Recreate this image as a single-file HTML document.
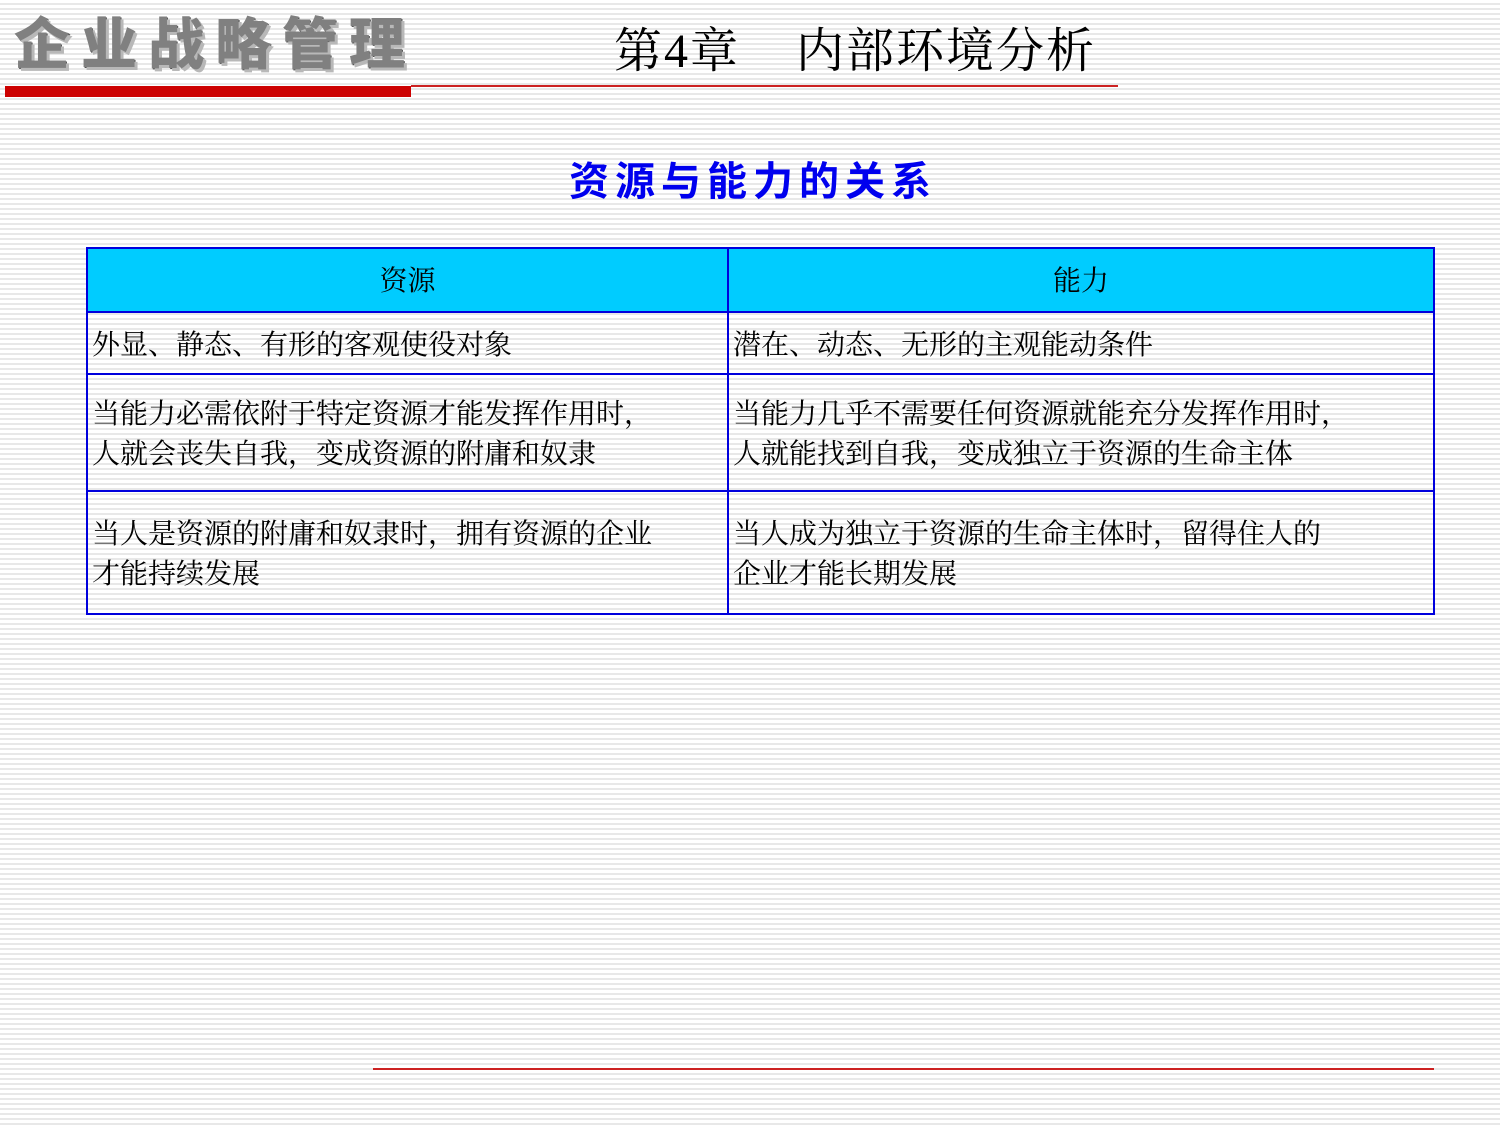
<!DOCTYPE html>
<html><head><meta charset="utf-8"><style>
body{margin:0;width:1500px;height:1125px;overflow:hidden;position:relative;
background:repeating-linear-gradient(to bottom,#ffffff 0,#ffffff 3px,#e8e8e8 3px,#e8e8e8 5px);
font-family:"Liberation Serif","Noto Serif CJK SC",serif;color:#000}
.a{position:absolute}
.logo{left:14px;top:12px;font-family:"Liberation Sans","Noto Sans CJK SC",sans-serif;font-weight:900;font-size:56px;letter-spacing:11px;color:#808080;text-shadow:3px 3px 0 #b8b8b8,1px 1px 0 #555;line-height:66px}
.chap{left:614px;top:22px;font-size:48px;line-height:60px;white-space:pre;letter-spacing:2px}
.title{left:0;width:1500px;text-align:center;top:156px;font-family:"Liberation Sans","Noto Sans CJK SC",sans-serif;font-weight:bold;font-size:40px;color:#0000ee;letter-spacing:6px;text-indent:6px;line-height:52px}
table{position:absolute;left:86px;top:247px;width:1349px;border-collapse:collapse;font-size:28px}
td{border:2px solid #0000dd;padding:5px 0 0 4px;vertical-align:middle;line-height:40px}
th{border:2px solid #0000dd;background:#00ccff;font-weight:normal;height:57px;line-height:40px;padding-top:4px}
</style></head><body>
<div class="a logo">企业战略管理</div>
<div class="a" style="left:5px;top:86px;width:406px;height:11px;background:#cc0000"></div>
<div class="a" style="left:411px;top:85px;width:707px;height:2px;background:#cc2222"></div>
<div class="a chap">第4章    内部环境分析</div>
<div class="a title">资源与能力的关系</div>
<table>
<tr><th style="width:637px">资源</th><th>能力</th></tr>
<tr style="height:62px"><td>外显、静态、有形的客观使役对象</td><td>潜在、动态、无形的主观能动条件</td></tr>
<tr style="height:117px"><td>当能力必需依附于特定资源才能发挥作用时，<br>人就会丧失自我，变成资源的附庸和奴隶</td><td>当能力几乎不需要任何资源就能充分发挥作用时，<br>人就能找到自我，变成独立于资源的生命主体</td></tr>
<tr style="height:123px"><td>当人是资源的附庸和奴隶时，拥有资源的企业<br>才能持续发展</td><td>当人成为独立于资源的生命主体时，留得住人的<br>企业才能长期发展</td></tr>
</table>
<div class="a" style="left:373px;top:1068px;width:1061px;height:2px;background:#cc2222"></div>
</body></html>
